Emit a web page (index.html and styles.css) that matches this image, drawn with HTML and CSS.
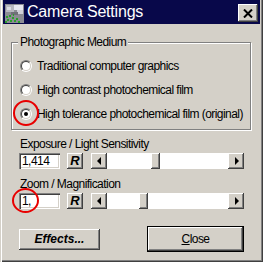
FILE: index.html
```html
<!DOCTYPE html>
<html>
<head>
<meta charset="utf-8">
<link rel="stylesheet" href="styles.css">
</head>
<body>
<div class="window">
  <div class="titlebar">
    <svg class="app-icon" width="19" height="19" viewBox="0 0 19 19">
      <rect x="0" y="0" width="19" height="19" fill="#8c8c94"/>
      <rect x="1" y="1" width="8" height="7" fill="#b8b8c0"/>
      <rect x="9" y="1" width="9" height="5" fill="#e8e8f0"/>
      <rect x="12" y="6" width="6" height="4" fill="#d0d0d8"/>
      <rect x="2" y="3" width="4" height="3" fill="#dcdce4"/>
      <rect x="6" y="8" width="7" height="3" fill="#707078"/>
      <g fill="#2aa02a">
        <rect x="1" y="12" width="2" height="2"/><rect x="4" y="11" width="2" height="2"/>
        <rect x="7" y="13" width="2" height="2"/><rect x="2" y="15" width="2" height="2"/>
        <rect x="5" y="16" width="2" height="2"/><rect x="9" y="16" width="2" height="2"/>
        <rect x="11" y="14" width="2" height="2"/><rect x="13" y="17" width="2" height="2"/>
        <rect x="0" y="17" width="2" height="2"/><rect x="8" y="10" width="1" height="2"/>
      </g>
    </svg>
    <span class="title">Camera Settings</span>
    <div class="close-x">
      <svg width="10" height="9" viewBox="0 0 10 9"><path d="M1 0.5 L9 8.5 M9 0.5 L1 8.5" stroke="#000" stroke-width="2"/></svg>
    </div>
  </div>

  <div class="group">
    <div class="group-label">Photographic Medium</div>
    <div class="options">
      <div class="option"><span class="radio"><span class="radio-in"></span></span><span>Traditional computer graphics</span></div>
      <div class="option"><span class="radio"><span class="radio-in"></span></span><span>High contrast photochemical film</span></div>
      <div class="option"><span class="radio marked"><span class="radio-in"><span class="dot"></span></span><span class="ring"></span></span><span>High tolerance photochemical film (original)</span></div>
    </div>
  </div>

  <div class="field">
    <div class="field-label">Exposure / Light Sensitivity</div>
    <div class="row">
      <div class="textbox">1,414</div>
      <div class="rbtn">R</div>
      <div class="scrollbar">
        <div class="sb-btn"><span class="tri-left"></span></div>
        <div class="sb-track"><div class="sb-thumb" style="margin-left:44px"></div></div>
        <div class="sb-btn"><span class="tri-right"></span></div>
      </div>
    </div>
  </div>

  <div class="field field-2">
    <div class="field-label">Zoom / Magnification</div>
    <div class="row">
      <div class="textbox marked">1,<span class="ring ring-2"></span></div>
      <div class="rbtn">R</div>
      <div class="scrollbar">
        <div class="sb-btn"><span class="tri-left"></span></div>
        <div class="sb-track"><div class="sb-thumb" style="margin-left:32px"></div></div>
        <div class="sb-btn"><span class="tri-right"></span></div>
      </div>
    </div>
  </div>

  <div class="actions">
    <div class="btn effects">Effects...</div>
    <div class="btn close"><u>C</u>lose</div>
  </div>
</div>
</body>
</html>
```
FILE: styles.css
```css
* { box-sizing: border-box; }
html, body { margin: 0; padding: 0; }
body {
  background: #d4d0c8;
  font-family: "Liberation Sans", Arial, sans-serif;
  font-size: 12px;
  letter-spacing: -0.55px;
  color: #000;
}
.window {
  width: 263px;
  height: 262px;
  padding: 0 3px 3px 3px;
  background: #d4d0c8;
  box-shadow: inset 1px 0 0 #d4d0c8, inset 2px 0 0 #fff, inset -1px -1px 0 #404040, inset -2px -2px 0 #808080;
  display: flex;
  flex-direction: column;
}
.titlebar {
  height: 24px;
  flex: none;
  background: #08084a;
  display: flex;
  align-items: center;
}
.app-icon { margin-left: 2px; margin-top: 3px; flex: none; }
.title {
  margin-left: 3px;
  color: #fff;
  font-size: 16px;
  letter-spacing: -0.2px;
}
.close-x {
  margin-left: auto;
  margin-right: 2px;
  margin-top: 2px;
  width: 20px;
  height: 18px;
  background: #d4d0c8;
  box-shadow: inset -1px -1px 0 #404040, inset 1px 1px 0 #fff, inset -2px -2px 0 #808080;
  display: flex;
  align-items: center;
  justify-content: center;
}
.group {
  margin: 18px 9px 0 8px;
  border: 1px solid #808080;
  box-shadow: 1px 1px 0 #fff, inset 1px 1px 0 #fff;
  padding: 0 0 3px 0;
}
.group-label {
  margin: -8px 0 0 6px;
  width: fit-content;
  padding: 0 2px;
  line-height: 15px;
  background: #d4d0c8;
}
.options { padding: 4px 0 0 8px; }
.option {
  height: 24px;
  display: flex;
  align-items: center;
  white-space: nowrap;
}
.radio {
  position: relative;
  width: 12px;
  height: 12px;
  margin-right: 5px;
  border-radius: 50%;
  border: 1px solid;
  border-color: #808080 #fff #fff #808080;
  flex: none;
}
.radio-in {
  display: flex;
  align-items: center;
  justify-content: center;
  width: 10px;
  height: 10px;
  border-radius: 50%;
  border: 1px solid;
  border-color: #404040 #d4d0c8 #d4d0c8 #404040;
  background: #fff;
}
.dot { width: 4px; height: 4px; border-radius: 50%; background: #000; }
.ring {
  position: absolute;
  left: -8px;
  top: -9px;
  width: 26px;
  height: 26px;
  border: 2px solid #e80000;
  border-radius: 50%;
}
.field { padding-left: 16px; margin-top: 7px; }
.field-2 { margin-top: 8px; }
.field-label { line-height: 15px; padding-left: 1px; }
.row { display: flex; height: 16px; margin-top: 1px; }
.textbox {
  position: relative;
  width: 41px;
  height: 16px;
  background: #fff;
  padding-left: 3px;
  line-height: 16px;
  box-shadow: inset 1px 1px 0 #808080, inset 2px 2px 0 #404040, inset -1px -1px 0 #fff, inset -2px -2px 0 #d4d0c8;
}
.ring-2 { left: -7px; top: -5px; width: 27px; height: 25px; }
.rbtn {
  width: 16px;
  height: 16px;
  margin-left: 7px;
  font-weight: bold;
  font-style: italic;
  font-size: 13px;
  letter-spacing: 0;
  line-height: 16px;
  text-align: center;
  box-shadow: inset -1px -1px 0 #404040, inset 1px 1px 0 #fff, inset -2px -2px 0 #808080;
}
.scrollbar { display: flex; width: 153px; height: 16px; margin-left: 8px; }
.sb-btn {
  width: 16px;
  height: 16px;
  flex: none;
  display: flex;
  align-items: center;
  justify-content: center;
  box-shadow: inset -1px -1px 0 #404040, inset 1px 1px 0 #fff, inset -2px -2px 0 #808080;
}
.tri-left { width: 0; height: 0; border-top: 4px solid transparent; border-bottom: 4px solid transparent; border-right: 4px solid #000; margin-left: -1px; }
.tri-right { width: 0; height: 0; border-top: 4px solid transparent; border-bottom: 4px solid transparent; border-left: 4px solid #000; margin-left: 1px; }
.sb-track { flex: 1; background: #fff; display: flex; }
.sb-thumb {
  width: 9px;
  height: 16px;
  background: #d4d0c8;
  box-shadow: inset -1px -1px 0 #404040, inset 1px 1px 0 #fff, inset -2px -2px 0 #808080;
}
.actions {
  display: flex;
  justify-content: space-between;
  align-items: center;
  padding: 0 16px;
  margin-top: 17px;
}
.btn {
  display: flex;
  align-items: center;
  justify-content: center;
  background: #d4d0c8;
}
.effects {
  width: 81px;
  height: 21px;
  font-weight: bold;
  font-style: italic;
  font-size: 12px;
  letter-spacing: 0;
  box-shadow: inset -1px -1px 0 #404040, inset 1px 1px 0 #fff, inset -2px -2px 0 #808080;
}
.close {
  width: 97px;
  height: 26px;
  border: 1px solid #000;
  box-shadow: inset -1px -1px 0 #404040, inset 1px 1px 0 #fff, inset -2px -2px 0 #808080;
}
```
